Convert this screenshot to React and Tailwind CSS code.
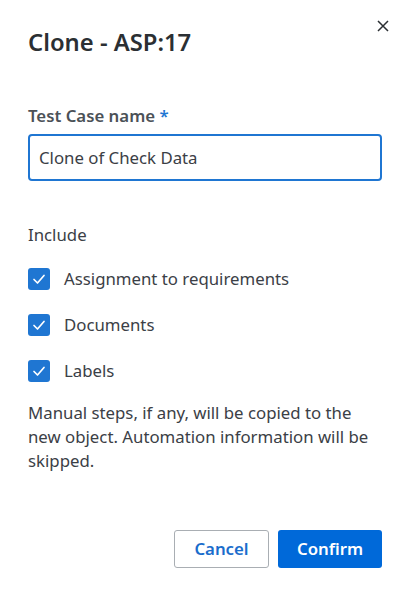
import { useState } from 'react';

const font = { fontFamily: '"Noto Sans", "Open Sans", sans-serif' };

function CheckRow({ label, checked, onToggle }) {
  return (
    <label className="flex items-center h-[22px] cursor-pointer">
      <span
        onClick={onToggle}
        className={`w-[22px] h-[22px] rounded-[3px] flex items-center justify-center ${checked ? 'bg-[#1f76d2]' : 'border-2 border-gray-400 bg-white'}`}
      >
        {checked && (
          <svg width="14" height="14" viewBox="0 0 14 14" fill="none">
            <path d="M2 7.5 L5.5 11 L12 3.5" stroke="white" strokeWidth="1.7" strokeLinecap="round" strokeLinejoin="round" />
          </svg>
        )}
      </span>
      <span className="ml-[14px] text-[16.8px] text-[#3b4046]">{label}</span>
    </label>
  );
}

export default function App() {
  const [name, setName] = useState('Clone of Check Data');
  const [assign, setAssign] = useState(true);
  const [docs, setDocs] = useState(true);
  const [labels, setLabels] = useState(true);

  return (
    <div className="w-[410px] h-[594px] bg-white relative" style={font}>
      <button className="absolute top-[18px] right-[19px] w-[16px] h-[16px] flex items-center justify-center text-[#2b2f33]">
        <svg width="12" height="12" viewBox="0 0 12 12">
          <path d="M1 1 L11 11 M11 1 L1 11" stroke="currentColor" strokeWidth="1.5" />
        </svg>
      </button>

      <div className="px-[28px] pt-[26px]">
        <h1 className="text-[23.8px] leading-[32px] font-semibold text-[#2b2f33]">Clone - ASP:17</h1>

        {/* Name field */}
        <div className="mt-[47px]">
          <div className="text-[16.8px] leading-[22px] font-semibold text-[#4b5157]">
            Test Case name <span className="text-[#1f76d2]">*</span>
          </div>
          <input
            autoFocus
            value={name}
            onChange={(e) => setName(e.target.value)}
            className="mt-[7px] w-full h-[47px] border-2 border-[#1f76d2] rounded-[4px] px-[9px] text-[16.8px] text-[#3b4046] caret-[#1f76d2] outline-none"
          />
        </div>

        {/* Include */}
        <div className="mt-[43px] text-[16.8px] leading-[22px] text-[#3b4046]">Include</div>
        <div className="mt-[22px] flex flex-col gap-[24px]">
          <CheckRow label="Assignment to requirements" checked={assign} onToggle={() => setAssign(!assign)} />
          <CheckRow label="Documents" checked={docs} onToggle={() => setDocs(!docs)} />
          <CheckRow label="Labels" checked={labels} onToggle={() => setLabels(!labels)} />
        </div>

        <p className="mt-[19px] text-[16.8px] leading-[24px] text-[#3b4046]">
          Manual steps, if any, will be copied to the new object. Automation information will be skipped.
        </p>

        <div className="mt-[57px] flex justify-end gap-[9px]">
          <button className="w-[95px] h-[38px] border border-[#a9aeb3] rounded-[3px] text-[16.8px] font-semibold text-[#1a6dcc]">
            Cancel
          </button>
          <button className="w-[104px] h-[38px] rounded-[3px] bg-[#0069d9] text-[16.8px] font-semibold text-white">
            Confirm
          </button>
        </div>
      </div>
    </div>
  );
}
